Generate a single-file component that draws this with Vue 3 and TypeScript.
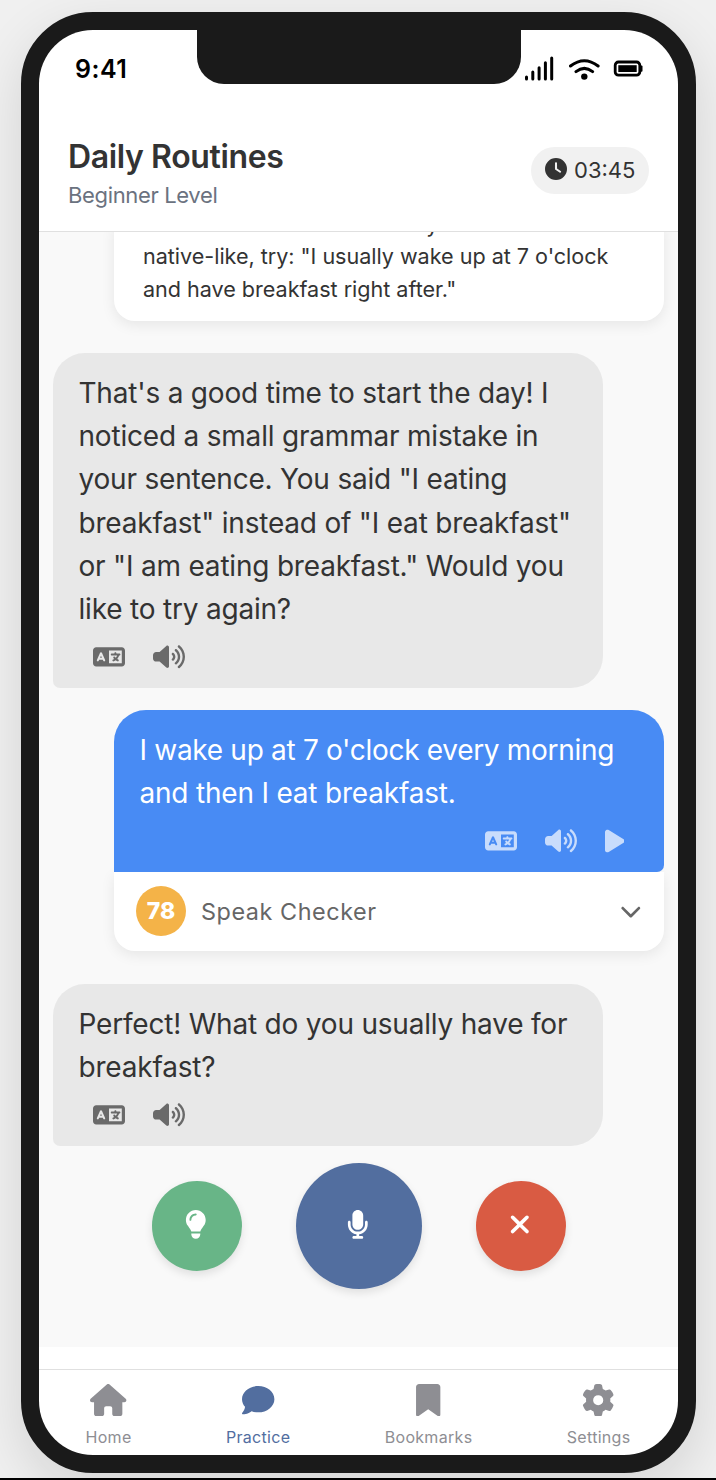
<script setup lang="ts">
interface Icon {
  box: string
  d: string
}

const icons: Record<string, Icon> = {
  clock: {
    box: '0 0 512 512',
    d: 'M256 0a256 256 0 1 1 0 512A256 256 0 1 1 256 0zM232 120V256c0 8 4 15.5 10.7 20l96 64c11 7.4 25.9 4.4 33.3-6.7s4.4-25.9-6.7-33.3L280 243.2V120c0-13.3-10.7-24-24-24s-24 10.7-24 24z',
  },
  language: {
    box: '0 0 640 512',
    d: 'M0 128C0 92.7 28.7 64 64 64H256h48 16H576c35.3 0 64 28.7 64 64V384c0 35.3-28.7 64-64 64H320 304 256 64c-35.3 0-64-28.7-64-64V128zm320 0V384H576V128H320zM178.3 175.9c-3.2-7.2-10.4-11.9-18.3-11.9s-15.1 4.7-18.3 11.9l-64 144c-4.5 10.1 .1 21.9 10.2 26.4s21.9-.1 26.4-10.2l8.9-20.1h73.6l8.9 20.1c4.5 10.1 16.3 14.6 26.4 10.2s14.6-16.3 10.2-26.4l-64-144zM160 233.2L179 276H141l19-42.8zM448 164c11 0 20 9 20 20v4h44 16c11 0 20 9 20 20s-9 20-20 20h-2l-1.6 4.5c-8.9 24.4-22.4 46.6-39.6 65.4c.9 .6 1.8 1.1 2.7 1.6l18.9 11.3c9.5 5.7 12.5 18 6.9 27.4s-18 12.5-27.4 6.9l-18.9-11.3c-4.5-2.7-8.8-5.5-13.1-8.5c-10.6 7.5-21.9 14-34 19.4l-3.6 1.6c-10.1 4.5-21.9-.1-26.4-10.2s.1-21.9 10.2-26.4l3.6-1.6c6.4-2.9 12.6-6.1 18.5-9.8l-12.2-12.2c-7.8-7.8-7.8-20.5 0-28.3s20.5-7.8 28.3 0l14.6 14.6 .5 .5c12.4-13.1 22.5-28.3 29.8-45H448 376c-11 0-20-9-20-20s9-20 20-20h52v-4c0-11 9-20 20-20z',
  },
  volume: {
    box: '0 0 640 512',
    d: 'M533.6 32.5C598.5 85.2 640 165.8 640 256s-41.5 170.7-106.4 223.5c-10.3 8.4-25.4 6.8-33.8-3.5s-6.8-25.4 3.5-33.8C557.5 398.2 592 331.2 592 256s-34.5-142.2-88.7-186.3c-10.3-8.4-11.8-23.5-3.5-33.8s23.5-11.8 33.8-3.5zM473.1 107c43.2 35.2 70.9 88.9 70.9 149s-27.7 113.8-70.9 149c-10.3 8.4-25.4 6.8-33.8-3.5s-6.8-25.4 3.5-33.8C475.3 341.3 496 301.1 496 256s-20.7-85.3-53.2-111.8c-10.3-8.4-11.8-23.5-3.5-33.8s23.5-11.8 33.8-3.5zm-60.5 74.5C434.1 199.1 448 225.9 448 256s-13.9 56.9-35.4 74.5c-10.3 8.4-25.4 6.8-33.8-3.5s-6.8-25.4 3.5-33.8C393.1 284.4 400 271 400 256s-6.9-28.4-17.7-37.3c-10.3-8.4-11.8-23.5-3.5-33.8s23.5-11.8 33.8-3.5zM301.1 34.8C312.6 40 320 51.4 320 64V448c0 12.6-7.4 24-18.9 29.2s-25 3.1-34.4-5.3L131.8 352H64c-35.3 0-64-28.7-64-64V224c0-35.3 28.7-64 64-64h67.8L266.7 40.1c9.4-8.4 22.9-10.4 34.4-5.3z',
  },
  play: {
    box: '0 0 384 512',
    d: 'M73 39c-14.8-9.1-33.4-9.4-48.5-.9S0 62.6 0 80V432c0 17.4 9.4 33.4 24.5 41.9s33.7 8.1 48.5-.9L361 297c14.3-8.7 23-24.2 23-41s-8.7-32.2-23-41L73 39z',
  },
  chevron: {
    box: '0 0 512 512',
    d: 'M233.4 406.6c12.5 12.5 32.8 12.5 45.3 0l192-192c12.5-12.5 12.5-32.8 0-45.3s-32.8-12.5-45.3 0L256 338.7 86.6 169.4c-12.5-12.5-32.8-12.5-45.3 0s-12.5 32.8 0 45.3l192 192z',
  },
  bulb: {
    box: '0 0 384 512',
    d: 'M272 384c9.6-31.9 29.5-59.1 49.2-86.2l0 0c5.2-7.1 10.4-14.2 15.4-21.4c19.8-28.5 31.4-63 31.4-100.3C368 78.8 289.2 0 192 0S16 78.8 16 176c0 37.3 11.6 71.9 31.4 100.3c5 7.2 10.2 14.3 15.4 21.4l0 0c19.8 27.1 39.7 54.4 49.2 86.2H272zM192 512c44.2 0 80-35.8 80-80V416H112v16c0 44.2 35.8 80 80 80zM112 176c0 8.8-7.2 16-16 16s-16-7.2-16-16c0-61.9 50.1-112 112-112c8.8 0 16 7.2 16 16s-7.2 16-16 16c-44.2 0-80 35.8-80 80z',
  },
  mic: {
    box: '0 0 384 512',
    d: 'M192 0C139 0 96 43 96 96V256c0 53 43 96 96 96s96-43 96-96V96c0-53-43-96-96-96zM64 216c0-13.3-10.7-24-24-24s-24 10.7-24 24v40c0 89.1 66.2 162.7 152 174.4V464H120c-13.3 0-24 10.7-24 24s10.7 24 24 24h72 72c13.3 0 24-10.7 24-24s-10.7-24-24-24H216V430.4c85.8-11.7 152-85.3 152-174.4V216c0-13.3-10.7-24-24-24s-24 10.7-24 24v40c0 70.7-57.3 128-128 128s-128-57.3-128-128V216z',
  },
  close: {
    box: '0 0 384 512',
    d: 'M342.6 150.6c12.5-12.5 12.5-32.8 0-45.3s-32.8-12.5-45.3 0L192 210.7 86.6 105.4c-12.5-12.5-32.8-12.5-45.3 0s-12.5 32.8 0 45.3L146.7 256 41.4 361.4c-12.5 12.5-12.5 32.8 0 45.3s32.8 12.5 45.3 0L192 301.3 297.4 406.6c12.5 12.5 32.8 12.5 45.3 0s12.5-32.8 0-45.3L237.3 256 342.6 150.6z',
  },
}

const tabs = [
  {
    label: 'Home',
    name: 'home',
    box: '0 0 576 512',
    d: 'M575.8 255.5c0 18-15 32.1-32 32.1h-32l.7 160.2c0 2.7-.2 5.4-.5 8.1V472c0 22.1-17.9 40-40 40H456c-1.1 0-2.2 0-3.3-.1c-1.4 .1-2.8 .1-4.2 .1H416 392c-22.1 0-40-17.9-40-40V448 384c0-17.7-14.3-32-32-32H256c-17.7 0-32 14.3-32 32v64 24c0 22.1-17.9 40-40 40H160 128.1c-1.5 0-3-.1-4.5-.2c-1.2 .1-2.4 .2-3.6 .2H104c-22.1 0-40-17.9-40-40V360c0-.9 0-1.9 .1-2.8V287.6H32c-18 0-32-14-32-32.1c0-9 3-17 10-24L266.4 8c7-7 15-8 22-8s15 2 21 7L564.8 231.5c8 7 12 15 11 24z',
  },
  {
    label: 'Practice',
    name: 'practice',
    box: '0 0 512 512',
    d: 'M512 240c0 114.9-114.6 208-256 208c-37.1 0-72.3-6.4-104.1-17.9c-11.9 8.7-31.3 20.6-54.3 30.6C73.6 471.1 44.7 480 16 480c-6.5 0-12.3-3.9-14.8-9.9c-2.5-6-1.1-12.8 3.4-17.4l0 0 0 0 0 0 0 0 .3-.3c.3-.3 .7-.7 1.3-1.4c1.1-1.2 2.8-3.1 4.9-5.7c4.1-5 9.6-12.4 15.2-21.6c10-16.6 19.5-38.4 21.4-62.9C17.7 326.8 0 285.1 0 240C0 125.1 114.6 32 256 32s256 93.1 256 208z',
  },
  {
    label: 'Bookmarks',
    name: 'bookmarks',
    box: '0 0 384 512',
    d: 'M0 48V487.7C0 501.1 10.9 512 24.3 512c5 0 9.9-1.5 14-4.4L192 400 345.7 507.6c4.1 2.9 9 4.4 14 4.4c13.4 0 24.3-10.9 24.3-24.3V48c0-26.5-21.5-48-48-48H48C21.5 0 0 21.5 0 48z',
  },
  {
    label: 'Settings',
    name: 'settings',
    box: '0 0 512 512',
    d: 'M495.9 166.6c3.2 8.7 .5 18.4-6.4 24.6l-43.3 39.4c1.1 8.3 1.7 16.8 1.7 25.4s-.6 17.1-1.7 25.4l43.3 39.4c6.9 6.2 9.6 15.9 6.4 24.6c-4.4 11.9-9.7 23.3-15.8 34.3l-4.7 8.1c-6.6 11-14 21.4-22.1 31.2c-5.9 7.2-15.7 9.6-24.5 6.8l-55.7-17.7c-13.4 10.3-28.2 18.9-44 25.4l-12.5 57.1c-2 9.1-9 16.3-18.2 17.8c-13.8 2.3-28 3.5-42.5 3.5s-28.7-1.2-42.5-3.5c-9.2-1.5-16.2-8.7-18.2-17.8l-12.5-57.1c-15.8-6.5-30.6-15.1-44-25.4L83.1 425.9c-8.8 2.8-18.6 .3-24.5-6.8c-8.1-9.8-15.5-20.2-22.1-31.2l-4.7-8.1c-6.1-11-11.4-22.4-15.8-34.3c-3.2-8.7-.5-18.4 6.4-24.6l43.3-39.4C64.6 273.1 64 264.6 64 256s.6-17.1 1.7-25.4L22.4 191.2c-6.9-6.2-9.6-15.9-6.4-24.6c4.4-11.9 9.7-23.3 15.8-34.3l4.7-8.1c6.6-11 14-21.4 22.1-31.2c5.9-7.2 15.7-9.6 24.5-6.8l55.7 17.7c13.4-10.3 28.2-18.9 44-25.4l12.5-57.1c2-9.1 9-16.3 18.2-17.8C227.3 1.2 241.5 0 256 0s28.7 1.2 42.5 3.5c9.2 1.5 16.2 8.7 18.2 17.8l12.5 57.1c15.8 6.5 30.6 15.1 44 25.4l55.7-17.7c8.8-2.8 18.6-.3 24.5 6.8c8.1 9.8 15.5 20.2 22.1 31.2l4.7 8.1c6.1 11 11.4 22.4 15.8 34.3zM256 336a80 80 0 1 0 0-160 80 80 0 1 0 0 160z',
  },
]

const feedback = [
  'sentence structure is already correct. To be more',
  'native-like, try: "I usually wake up at 7 o\'clock',
  'and have breakfast right after."',
]

const grammarTip = [
  "That's a good time to start the day! I",
  'noticed a small grammar mistake in',
  'your sentence. You said "I eating',
  'breakfast" instead of "I eat breakfast"',
  'or "I am eating breakfast." Would you',
  'like to try again?',
]

const reply = ["I wake up at 7 o'clock every morning", 'and then I eat breakfast.']
const question = ['Perfect! What do you usually have for', 'breakfast?']

const actions = [
  { name: 'bulb', tone: 'hint' },
  { name: 'mic', tone: 'record' },
  { name: 'close', tone: 'end' },
]
</script>

<template>
  <div class="stage">
    <div class="phone">
      <div class="notch"></div>
      <div class="screen">
        <div class="status">
          <span class="time">9:41</span>
          <svg class="status-icons" viewBox="0 0 120 28" width="120" height="28">
            <g stroke="#000" stroke-width="3" stroke-linecap="round" fill="none">
              <path d="M3.5 22v2M9.8 17v7M16.1 12.7v11.3M22.4 7.7v16.3M28.7 3v21" />
              <path d="M47.5 11q13.8-10.6 27.6 0M53 16.6q8.3-6.4 16.6 0" />
            </g>
            <circle cx="61.3" cy="21.6" r="3.2" fill="#000" />
            <rect x="92.2" y="7" width="24.6" height="13.2" rx="3.2" fill="none" stroke="#000" stroke-width="2.8" />
            <rect x="95.3" y="10.2" width="18.4" height="6.8" fill="#000" />
            <rect x="117" y="10.5" width="2.5" height="6.2" rx="1" fill="#000" />
          </svg>
        </div>

        <header class="header">
          <div>
            <h1>Daily Routines</h1>
            <p>Beginner Level</p>
          </div>
          <div class="timer">
            <svg class="clock" :viewBox="icons.clock.box"><path fill-rule="evenodd" :d="icons.clock.d" /></svg>
            <span>03:45</span>
          </div>
        </header>

        <main class="chat">
          <div class="feedback">
            <span v-for="line in feedback" :key="line" class="line">{{ line }}</span>
          </div>

          <div class="bubble bot">
            <span v-for="line in grammarTip" :key="line" class="line">{{ line }}</span>
            <div class="tools">
              <svg class="wide" :viewBox="icons.language.box"><path :d="icons.language.d" /></svg>
              <svg class="wide" :viewBox="icons.volume.box"><path :d="icons.volume.d" /></svg>
            </div>
          </div>

          <div class="mine">
            <div class="bubble user">
              <span v-for="line in reply" :key="line" class="line">{{ line }}</span>
              <div class="tools">
                <svg class="wide" :viewBox="icons.language.box"><path :d="icons.language.d" /></svg>
                <svg class="wide" :viewBox="icons.volume.box"><path :d="icons.volume.d" /></svg>
                <svg class="slim" :viewBox="icons.play.box"><path :d="icons.play.d" /></svg>
              </div>
            </div>
            <div class="checker">
              <span class="score">78</span>
              <span class="checker-label">Speak Checker</span>
              <svg class="chevron" :viewBox="icons.chevron.box"><path :d="icons.chevron.d" /></svg>
            </div>
          </div>

          <div class="bubble bot">
            <span v-for="line in question" :key="line" class="line">{{ line }}</span>
            <div class="tools">
              <svg class="wide" :viewBox="icons.language.box"><path :d="icons.language.d" /></svg>
              <svg class="wide" :viewBox="icons.volume.box"><path :d="icons.volume.d" /></svg>
            </div>
          </div>

          <div class="actions">
            <button v-for="a in actions" :key="a.name" :class="['action', a.tone]">
              <svg :viewBox="icons[a.name].box"><path :d="icons[a.name].d" /></svg>
            </button>
          </div>
        </main>

        <nav class="tabs">
          <div v-for="t in tabs" :key="t.name" :class="['tab', t.name]">
            <svg :viewBox="t.box"><path :d="t.d" /></svg>
            <span>{{ t.label }}</span>
          </div>
        </nav>
      </div>
    </div>
  </div>
</template>

<style>
body {
  margin: 0;
}
</style>

<style scoped>
.stage {
  box-sizing: border-box;
  width: 716px;
  height: 1480px;
  overflow: hidden;
  padding: 12px 0 0 21px;
  background: #f0f0f0;
  border-bottom: 2px solid #000;
  font-family: Inter, Roboto, sans-serif;
  color: #333;
}
.phone {
  position: relative;
  box-sizing: border-box;
  width: 675px;
  height: 1461px;
  border-radius: 72px;
  border: 18px solid #1a1a1a;
  background: #1a1a1a;
  box-shadow: 0 18px 54px rgba(0, 0, 0, 0.12);
}
.notch {
  position: absolute;
  left: 158px;
  top: 0;
  z-index: 2;
  width: 324px;
  height: 54px;
  background: #1a1a1a;
  border-radius: 0 0 27px 27px;
}
.screen {
  display: flex;
  flex-direction: column;
  width: 639px;
  height: 1425px;
  border-radius: 54px;
  overflow: hidden;
  background: #fff;
}
.status {
  box-sizing: border-box;
  display: flex;
  justify-content: space-between;
  align-items: center;
  height: 77px;
  padding: 0 35px 0 36px;
  color: #000;
}
.time {
  font-size: 25px;
  font-weight: 600;
  letter-spacing: 0.5px;
}
.status-icons {
  display: block;
}
.header {
  box-sizing: border-box;
  display: flex;
  justify-content: space-between;
  align-items: center;
  height: 125px;
  padding: 2px 29px 0 29px;
  border-bottom: 1px solid #e0e0e0;
}
h1 {
  margin: 5px 0 0;
  font-size: 32px;
  line-height: 39px;
  font-weight: 600;
  letter-spacing: -0.38px;
}
p {
  margin: 6px 0 0;
  font-size: 22px;
  line-height: 27px;
  letter-spacing: -0.35px;
  color: #6b7280;
}
.timer {
  box-sizing: border-box;
  display: flex;
  align-items: center;
  gap: 7px;
  width: 118px;
  height: 47px;
  padding: 0 14px;
  border-radius: 24px;
  background: #f1f1f1;
  font-size: 22px;
}
.clock {
  width: 22px;
  height: 22px;
  flex: none;
  margin-top: -3px;
}
.clock,
.tools svg,
.chevron,
.action svg,
.tab svg {
  fill: currentColor;
}
.line {
  display: block;
  white-space: nowrap;
}
.chat {
  box-sizing: border-box;
  display: flex;
  flex-direction: column;
  height: 1115px;
  padding: 0 14px;
  overflow: hidden;
  background: #f9f9f9;
}
.feedback {
  box-sizing: border-box;
  align-self: flex-end;
  flex: none;
  width: 550px;
  height: 97px;
  margin-top: -8px;
  padding: 0 29px;
  border-radius: 0 0 21px 21px;
  background: #fff;
  box-shadow: 0 4px 14px rgba(0, 0, 0, 0.08);
  font-size: 21.6px;
  line-height: 33px;
  letter-spacing: -0.03px;
}
.feedback .line:first-child {
  margin-top: -16px;
  margin-bottom: -1px;
}
.bubble {
  box-sizing: border-box;
  width: 550px;
  padding: 19px 25px 5.2px 25.5px;
  font-size: 28px;
  line-height: 43.2px;
  letter-spacing: -0.2px;
}
.bot {
  background: #e8e8e8;
  border-radius: 32px 32px 32px 7px;
  margin-top: 32px;
}
.tools {
  display: flex;
  align-items: center;
  gap: 28px;
  height: 51.4px;
  padding: 0 15px 0 14.3px;
  color: #6a6a6a;
}
.wide {
  width: 32px;
  height: 25.6px;
}
.slim {
  width: 19.4px;
  height: 26px;
}
.mine {
  align-self: flex-end;
  width: 550px;
  margin-top: 22px;
}
.user {
  position: relative;
  background: #488bf4;
  color: #fff;
  border-radius: 32px 32px 7px 0;
  letter-spacing: -0.3px;
}
.user .line:nth-child(2) {
  letter-spacing: -0.2px;
}
.user .tools {
  justify-content: flex-end;
  color: #c8dcfc;
}
.checker {
  box-sizing: border-box;
  display: flex;
  align-items: center;
  height: 79.4px;
  padding: 0 22px 1.4px;
  background: #fff;
  border-radius: 0 0 21px 21px;
  box-shadow: 0 4px 14px rgba(0, 0, 0, 0.08);
}
.score {
  width: 50px;
  height: 50px;
  border-radius: 50%;
  background: #f4b348;
  color: #fff;
  font-size: 23px;
  font-weight: 800;
  line-height: 51px;
  text-align: center;
}
.checker-label {
  margin: 2px 0 0 15px;
  font-size: 23.4px;
  letter-spacing: 0.55px;
  color: #666;
}
.chevron {
  width: 21.6px;
  height: 21.6px;
  margin-left: auto;
  color: #666;
}
.mine + .bot {
  margin-top: 32.4px;
}
.actions {
  display: flex;
  justify-content: center;
  align-items: center;
  gap: 54px;
  margin-top: 17px;
}
.action {
  display: flex;
  align-items: center;
  justify-content: center;
  width: 90px;
  height: 90px;
  padding: 0 1px 2px 0;
  border: 0;
  border-radius: 50%;
  color: #fff;
  box-shadow: 0 4px 9px rgba(0, 0, 0, 0.1);
}
.action svg {
  width: 21.6px;
  height: 28.8px;
}
.hint {
  background: #68b587;
}
.record {
  width: 126px;
  height: 126px;
  background: #526e9f;
}
.end {
  background: #d95b43;
}
.tabs {
  box-sizing: border-box;
  display: flex;
  justify-content: space-between;
  height: 86px;
  margin-top: 22px;
  padding: 14px 47.5px 0 46.5px;
  border-top: 1px solid #e0e0e0;
}
.tab {
  display: flex;
  flex-direction: column;
  align-items: center;
  color: #8e8e93;
  font-size: 16px;
  line-height: 20px;
  letter-spacing: 0.3px;
}
.tab svg {
  width: 36.4px;
  height: 32.4px;
  margin-bottom: 11px;
}
.practice {
  color: #526e9f;
}
</style>
